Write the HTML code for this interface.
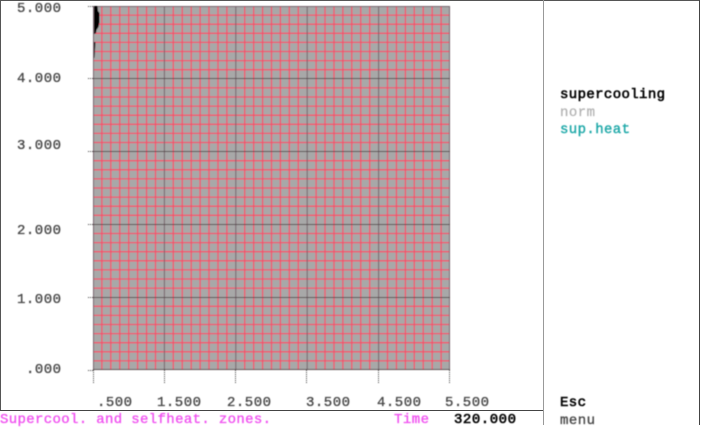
<!DOCTYPE html>
<html><head><meta charset="utf-8"><style>
html,body{margin:0;padding:0;background:#fff;width:704px;height:428px;overflow:hidden}
svg{display:block}
text{font-family:"Liberation Mono",monospace;font-size:14px;white-space:pre}
.l{fill:#484848;stroke:#484848;stroke-width:.35}
.b{fill:#000;stroke:#000;stroke-width:.6}
.m{fill:#f050f0;stroke:#f050f0;stroke-width:.35}
</style></head><body>
<svg width="704" height="428" viewBox="0 0 704 428" xmlns="http://www.w3.org/2000/svg">
<defs><filter id="s" x="0" y="0" width="100%" height="100%"><feGaussianBlur stdDeviation="0.45"/></filter></defs>
<rect width="704" height="428" fill="#fff"/>
<g shape-rendering="crispEdges">
<rect x="0" y="0" width="700" height="1" fill="#555"/>
<rect x="0" y="0" width="1" height="410" fill="#555"/>
<rect x="699" y="0" width="1" height="425" fill="#444"/>
<rect x="543" y="0" width="1" height="425" fill="#999"/>
<rect x="0" y="410" width="543" height="1" fill="#444"/>
</g>
<g filter="url(#s)">
<rect x="93" y="6" width="357" height="364" fill="#a8a8a8"/>
<path stroke="#f4506a" stroke-width="1.3" fill="none" d="M101.9 6V370M110.85 6V370M119.8 6V370M128.7 6V370M137.6 6V370M146.55 6V370M155.5 6V370M173.3 6V370M182.25 6V370M191.2 6V370M200.1 6V370M209 6V370M218 6V370M226.9 6V370M244.7 6V370M253.65 6V370M262.6 6V370M271.5 6V370M280.4 6V370M289.35 6V370M298.3 6V370M316.1 6V370M325 6V370M334 6V370M342.9 6V370M351.8 6V370M360.75 6V370M369.7 6V370M387.5 6V370M396.45 6V370M405.4 6V370M414.3 6V370M423.2 6V370M432.15 6V370M441.1 6V370M93 15.1H450M93 24.2H450M93 33.3H450M93 42.4H450M93 51.5H450M93 60.6H450M93 69.7H450M93 87.9H450M93 97H450M93 106.1H450M93 115.2H450M93 124.3H450M93 133.4H450M93 142.5H450M93 160.7H450M93 169.8H450M93 178.9H450M93 188H450M93 197.1H450M93 206.2H450M93 215.3H450M93 233.5H450M93 242.6H450M93 251.7H450M93 260.8H450M93 269.9H450M93 279H450M93 288.1H450M93 306.3H450M93 315.4H450M93 324.5H450M93 333.6H450M93 342.7H450M93 351.8H450M93 360.9H450"/>
<path stroke="#75626a" stroke-width="1" fill="none" d="M93.5 6V370M164.4 6V370M235.8 6V370M307.2 6V370M378.6 6V370M449.5 6V370M93 6.5H450"/>
<path stroke="#54484c" stroke-width="1" fill="none" d="M93 78.5H450M93 151.5H450M93 224.5H450M93 297.5H450M93 369.5H450"/>
<path stroke="#444" stroke-width="1" stroke-dasharray="1 1" fill="none" d="M88 6.5H93M88 78.5H93M88 151.5H93M88 224.5H93M88 297.5H93M88 370.5H93M93.5 370V383M164.5 370V383M235.5 370V383M306.5 370V383M378.5 370V383M449.5 370V383"/>
<path fill="#000" d="M94 6H97.5L98 11L99.5 13V22L98.5 27L96.5 30L96 33L94.5 34H94ZM94 42H95.5L95 50L94.5 58H94Z"/>
<g class="l">
<text x="17" y="12" textLength="44" lengthAdjust="spacing">5.000</text>
<text x="17" y="82" textLength="44" lengthAdjust="spacing">4.000</text>
<text x="17" y="149" textLength="44" lengthAdjust="spacing">3.000</text>
<text x="17" y="234" textLength="44" lengthAdjust="spacing">2.000</text>
<text x="17" y="303" textLength="44" lengthAdjust="spacing">1.000</text>
<text x="26" y="373" textLength="35" lengthAdjust="spacing">.000</text>
<text x="97" y="406" textLength="35" lengthAdjust="spacing">.500</text>
<text x="157" y="406" textLength="44" lengthAdjust="spacing">1.500</text>
<text x="227" y="406" textLength="44" lengthAdjust="spacing">2.500</text>
<text x="306" y="406" textLength="44" lengthAdjust="spacing">3.500</text>
<text x="377" y="406" textLength="44" lengthAdjust="spacing">4.500</text>
<text x="445" y="406" textLength="44" lengthAdjust="spacing">5.500</text>
</g>
<text class="m" x="0" y="423" textLength="271" lengthAdjust="spacing">Supercool. and selfheat. zones.</text>
<text class="m" x="394" y="423" textLength="35" lengthAdjust="spacing">Time</text>
<text class="b" x="454" y="423" textLength="62" lengthAdjust="spacing">320.000</text>
<text class="b" x="560" y="98" textLength="105" lengthAdjust="spacing">supercooling</text>
<text x="560" y="116" textLength="35" lengthAdjust="spacing" fill="#b0b0b0" stroke="#b0b0b0" stroke-width=".2">norm</text>
<text x="560" y="133" textLength="70" lengthAdjust="spacing" fill="#20a8a8" stroke="#20a8a8" stroke-width=".4">sup.heat</text>
<text class="b" x="560" y="406" textLength="26" lengthAdjust="spacing">Esc</text>
<text class="l" x="560" y="424" textLength="35" lengthAdjust="spacing">menu</text>
</g>
</svg>
</body></html>
